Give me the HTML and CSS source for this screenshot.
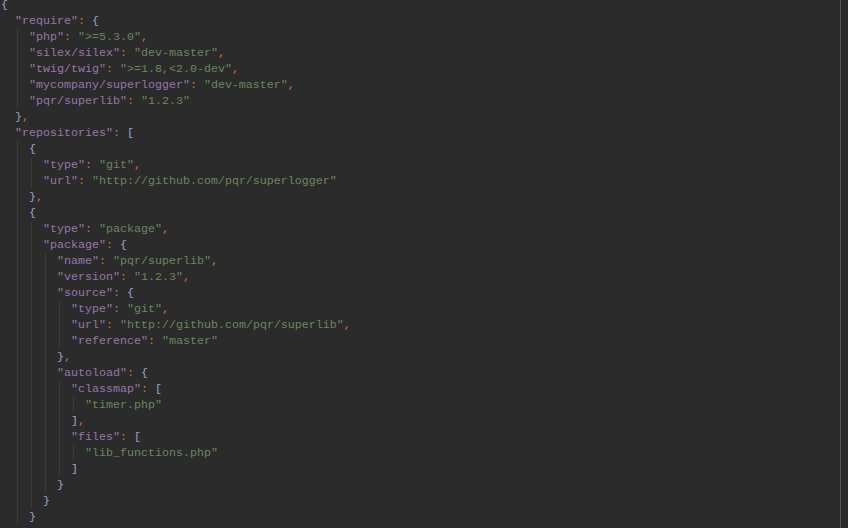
FILE: index.html
```html
<!DOCTYPE html>
<html>
<head>
<meta charset="utf-8">
<link rel="stylesheet" href="styles.css">
</head>
<body>
<div class="editor">
  <div class="code">
    <div class="l"><span class="p">{</span></div>
    <div class="b top">
      <div class="l"><span class="k">"require"</span><span class="o">:</span> <span class="p">{</span></div>
      <div class="b g">
        <div class="l"><span class="k">"php"</span><span class="o">:</span> <span class="s">"&gt;=5.3.0"</span><span class="o">,</span></div>
        <div class="l"><span class="k">"silex/silex"</span><span class="o">:</span> <span class="s">"dev-master"</span><span class="o">,</span></div>
        <div class="l"><span class="k">"twig/twig"</span><span class="o">:</span> <span class="s">"&gt;=1.8,&lt;2.0-dev"</span><span class="o">,</span></div>
        <div class="l"><span class="k">"mycompany/superlogger"</span><span class="o">:</span> <span class="s">"dev-master"</span><span class="o">,</span></div>
        <div class="l"><span class="k">"pqr/superlib"</span><span class="o">:</span> <span class="s">"1.2.3"</span></div>
      </div>
      <div class="l"><span class="p">}</span><span class="o">,</span></div>
      <div class="l"><span class="k">"repositories"</span><span class="o">:</span> <span class="p">[</span></div>
      <div class="b g">
        <div class="l"><span class="p">{</span></div>
        <div class="b g">
          <div class="l"><span class="k">"type"</span><span class="o">:</span> <span class="s">"git"</span><span class="o">,</span></div>
          <div class="l"><span class="k">"url"</span><span class="o">:</span> <span class="s">"http://github.com/pqr/superlogger"</span></div>
        </div>
        <div class="l"><span class="p">}</span><span class="o">,</span></div>
        <div class="l"><span class="p">{</span></div>
        <div class="b g">
          <div class="l"><span class="k">"type"</span><span class="o">:</span> <span class="s">"package"</span><span class="o">,</span></div>
          <div class="l"><span class="k">"package"</span><span class="o">:</span> <span class="p">{</span></div>
          <div class="b g">
            <div class="l"><span class="k">"name"</span><span class="o">:</span> <span class="s">"pqr/superlib"</span><span class="o">,</span></div>
            <div class="l"><span class="k">"version"</span><span class="o">:</span> <span class="s">"1.2.3"</span><span class="o">,</span></div>
            <div class="l"><span class="k">"source"</span><span class="o">:</span> <span class="p">{</span></div>
            <div class="b g">
              <div class="l"><span class="k">"type"</span><span class="o">:</span> <span class="s">"git"</span><span class="o">,</span></div>
              <div class="l"><span class="k">"url"</span><span class="o">:</span> <span class="s">"http://github.com/pqr/superlib"</span><span class="o">,</span></div>
              <div class="l"><span class="k">"reference"</span><span class="o">:</span> <span class="s">"master"</span></div>
            </div>
            <div class="l"><span class="p">}</span><span class="o">,</span></div>
            <div class="l"><span class="k">"autoload"</span><span class="o">:</span> <span class="p">{</span></div>
            <div class="b g">
              <div class="l"><span class="k">"classmap"</span><span class="o">:</span> <span class="p">[</span></div>
              <div class="b g">
                <div class="l"><span class="s">"timer.php"</span></div>
              </div>
              <div class="l"><span class="p">]</span><span class="o">,</span></div>
              <div class="l"><span class="k">"files"</span><span class="o">:</span> <span class="p">[</span></div>
              <div class="b g">
                <div class="l"><span class="s">"lib_functions.php"</span></div>
              </div>
              <div class="l"><span class="p">]</span></div>
            </div>
            <div class="l"><span class="p">}</span></div>
          </div>
          <div class="l"><span class="p">}</span></div>
        </div>
        <div class="l"><span class="p">}</span></div>
      </div>
    </div>
  </div>
  <div class="scroll"></div>
</div>
</body>
</html>
```
FILE: styles.css
```css
html, body {
  margin: 0;
  padding: 0;
  background: #2b2b2b;
  overflow: hidden;
}
.editor {
  display: flex;
  align-items: flex-start;
  width: 848px;
  height: 528px;
  overflow: hidden;
}
.code {
  flex: 1;
  padding-left: 1px;
  margin-top: -3px;
  font-family: "Liberation Mono", monospace;
  font-size: 11.667px;
  line-height: 16px;
  color: #a9b7c6;
}
.l {
  height: 16px;
  white-space: pre;
}
.b.top {
  padding-left: 14px;
}
.b.g {
  margin-left: 2px;
  border-left: 1px solid #3b3b3b;
  padding-left: 11px;
}
.k { color: #9876aa; }
.s { color: #6a8759; }
.o { color: #cc7832; }
.p { color: #93a8cc; }
.scroll {
  align-self: stretch;
  width: 7px;
  border-left: 1px solid #555555;
  background: #2b2b2b;
}
```
